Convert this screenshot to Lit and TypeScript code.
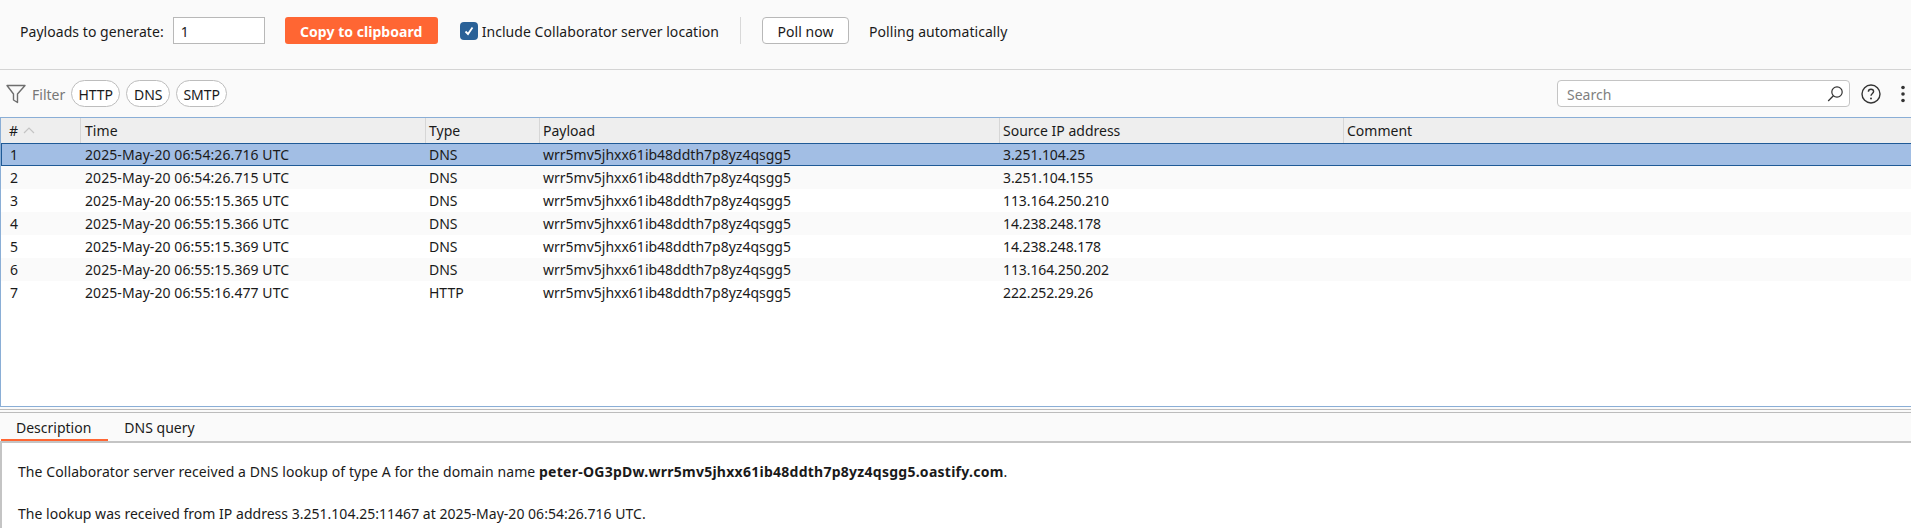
import { LitElement, html, css } from 'lit';
import { customElement } from 'lit/decorators.js';

interface Interaction {
  id: number;
  time: string;
  type: string;
  ip: string;
}

const PAYLOAD = 'wrr5mv5jhxx61ib48ddth7p8yz4qsgg5';

const ROWS: Interaction[] = [
  { id: 1, time: '2025-May-20 06:54:26.716 UTC', type: 'DNS', ip: '3.251.104.25' },
  { id: 2, time: '2025-May-20 06:54:26.715 UTC', type: 'DNS', ip: '3.251.104.155' },
  { id: 3, time: '2025-May-20 06:55:15.365 UTC', type: 'DNS', ip: '113.164.250.210' },
  { id: 4, time: '2025-May-20 06:55:15.366 UTC', type: 'DNS', ip: '14.238.248.178' },
  { id: 5, time: '2025-May-20 06:55:15.369 UTC', type: 'DNS', ip: '14.238.248.178' },
  { id: 6, time: '2025-May-20 06:55:15.369 UTC', type: 'DNS', ip: '113.164.250.202' },
  { id: 7, time: '2025-May-20 06:55:16.477 UTC', type: 'HTTP', ip: '222.252.29.26' },
];

@customElement('app-root')
export class AppRoot extends LitElement {
  static styles = css`
    :host {
      display: block;
      width: 1911px;
      height: 528px;
      overflow: hidden;
      background: #fafafa;
      color: #1a1a1a;
      font-family: 'Noto Sans', sans-serif;
      font-size: 14px;
    }
    .topbar {
      display: flex;
      align-items: center;
      height: 70px;
      box-sizing: border-box;
      padding: 0 0 8px 20px;
      border-bottom: 1px solid #d4d4d4;
      letter-spacing: 0.05px;
    }
    .topbar span {
      padding-top: 2px;
    }
    .qty {
      box-sizing: border-box;
      width: 92px;
      height: 27px;
      margin-left: 9px;
      padding: 2px 0 0 7px;
      display: flex;
      align-items: center;
      background: #fff;
      border: 1px solid #b8b8b8;
    }
    .copy {
      box-sizing: border-box;
      width: 153px;
      height: 27px;
      margin-left: 20px;
      padding-top: 2px;
      display: flex;
      align-items: center;
      justify-content: center;
      background: #ff6633;
      color: #fff;
      font-weight: 700;
      border-radius: 3px;
    }
    .check {
      width: 18px;
      height: 18px;
      margin-left: 22px;
      margin-right: 4px;
      background: #2a6197;
      border-radius: 4px;
      display: flex;
      align-items: center;
      justify-content: center;
    }
    .divider {
      width: 1px;
      height: 27px;
      margin-left: 21px;
      background: #d8d8d8;
    }
    .poll {
      box-sizing: border-box;
      width: 87px;
      height: 27px;
      margin-left: 21px;
      padding-top: 2px;
      display: flex;
      align-items: center;
      justify-content: center;
      background: #fff;
      border: 1px solid #b8b8b8;
      border-radius: 4px;
    }
    .status {
      margin-left: 20px;
    }
    .filterbar {
      display: flex;
      align-items: center;
      height: 47px;
      box-sizing: border-box;
      padding: 0 0 0 6px;
    }
    .filter-label {
      margin-left: 6px;
      margin-right: 6px;
      padding-top: 2px;
      color: #777;
    }
    .pill {
      box-sizing: border-box;
      height: 27px;
      margin-right: 6px;
      padding-top: 2px;
      display: flex;
      align-items: center;
      justify-content: center;
      border: 1px solid #bdbdbd;
      border-radius: 14px;
      background: #fff;
    }
    .pill.http {
      width: 49px;
    }
    .pill.dns {
      width: 44px;
    }
    .pill.smtp {
      width: 51px;
    }
    .search {
      box-sizing: border-box;
      width: 293px;
      height: 27px;
      margin-left: auto;
      padding: 0 6px 0 9px;
      display: flex;
      align-items: center;
      justify-content: space-between;
      background: #fff;
      border: 1px solid #c4c4c4;
      border-radius: 4px;
      color: #808080;
    }
    .search span {
      padding-top: 2px;
    }
    .help {
      margin-left: 11px;
      display: block;
    }
    .dots {
      margin-left: 19px;
      margin-right: 5px;
      display: block;
    }
    .table {
      box-sizing: border-box;
      height: 290px;
      background: #fff;
      border: 1px solid #8aaed6;
      border-right: 0;
    }
    .row {
      display: grid;
      grid-template-columns: 80px 345px 114px 460px 344px 1fr;
      height: 23px;
      line-height: 24px;
    }
    .row > div {
      padding-left: 3px;
      white-space: nowrap;
      overflow: hidden;
    }
    .row > div:nth-child(2) {
      padding-left: 4px;
      letter-spacing: 0.08px;
    }
    .row.body > div:nth-child(5) {
      letter-spacing: -0.1px;
    }
    .head {
      height: 25px;
      line-height: 25px;
      background: #eeeeee;
    }
    .head > div {
      border-right: 1px solid #d6d6d6;
      display: flex;
      align-items: center;
      gap: 5px;
    }
    .head > div:last-child {
      border-right: 0;
    }
    .head > div:first-child {
      padding-left: 8px;
    }
    .row.alt {
      background: #fafafa;
    }
    .row.selected {
      background: #a2bee4;
      box-sizing: border-box;
      line-height: 21px;
      border-top: 1px solid #1f5a96;
      border-bottom: 1px solid #1f5a96;
      box-shadow: inset 1px 0 #1f5a96;
    }
    .row.body > div:first-child {
      padding-left: 9px;
    }
    .split {
      height: 4px;
      margin-top: 2px;
      background: #fafafa;
      border-top: 1px solid #bcbcbc;
      border-bottom: 1px solid #bcbcbc;
      box-sizing: border-box;
    }
    .tabs {
      display: flex;
      height: 30px;
      box-sizing: border-box;
      background: #fafafa;
      border-bottom: 2px solid #c4c4c4;
    }
    .tab {
      box-sizing: border-box;
      height: 28px;
      padding: 0 16px;
      line-height: 29px;
    }
    .tab.active {
      margin-left: 1px;
      padding: 0 17px 0 15px;
      border-bottom: 2px solid #ff6633;
    }
    .details {
      box-sizing: border-box;
      height: 85px;
      padding: 19px 0 0 16px;
      background: #fff;
      border-left: 2px solid #c4c4c4;
    }
    .details p {
      margin: 0 0 22px;
      line-height: 20px;
      letter-spacing: 0.02px;
    }
    .details p.lookup {
      letter-spacing: 0.08px;
    }
    .details b {
      letter-spacing: 0.26px;
    }
  `;

  render() {
    return html`
      <div class="topbar">
        <span>Payloads to generate:</span>
        <div class="qty">1</div>
        <div class="copy">Copy to clipboard</div>
        <div class="check">
          <svg width="12" height="12" viewBox="0 0 12 12">
            <path d="M2.5 6.5 5 9 9.5 2.5" fill="none" stroke="#fff" stroke-width="1.8" />
          </svg>
        </div>
        <span>Include Collaborator server location</span>
        <div class="divider"></div>
        <div class="poll">Poll now</div>
        <span class="status">Polling automatically</span>
      </div>
      <div class="filterbar">
        <svg width="20" height="20" viewBox="0 0 20 20">
          <path d="M1 1.5H19L11.5 10V18.5L7.5 16V10Z" fill="none" stroke="#6e6e6e" stroke-width="1.4" stroke-linejoin="round" />
        </svg>
        <span class="filter-label">Filter</span>
        <div class="pill http">HTTP</div>
        <div class="pill dns">DNS</div>
        <div class="pill smtp">SMTP</div>
        <div class="search">
          <span>Search</span>
          <svg width="16" height="16" viewBox="0 0 16 16">
            <circle cx="10" cy="6" r="5.2" fill="none" stroke="#333" stroke-width="1.2" />
            <path d="M6.4 9.8 1.2 15" stroke="#333" stroke-width="1.3" />
          </svg>
        </div>
        <svg class="help" width="20" height="20" viewBox="0 0 20 20">
          <circle cx="10" cy="10" r="9" fill="none" stroke="#333" stroke-width="1.4" />
          <path d="M7.4 7.8C7.4 6.2 8.6 5.3 10 5.3S12.6 6.2 12.6 7.6C12.6 9.4 10 9.6 10 11.8" fill="none" stroke="#333" stroke-width="1.4" />
          <circle cx="10" cy="14.4" r="1" fill="#333" />
        </svg>
        <svg class="dots" width="6" height="20" viewBox="0 0 6 20">
          <circle cx="3" cy="3.5" r="1.8" fill="#333" />
          <circle cx="3" cy="10" r="1.8" fill="#333" />
          <circle cx="3" cy="16.5" r="1.8" fill="#333" />
        </svg>
      </div>
      <div class="table">
        <div class="row head">
          <div>#
            <svg width="12" height="7" viewBox="0 0 12 7">
              <path d="M1 6 6 1 11 6" fill="none" stroke="#c4c4c4" stroke-width="1.2" />
            </svg>
          </div>
          <div>Time</div>
          <div>Type</div>
          <div>Payload</div>
          <div>Source IP address</div>
          <div>Comment</div>
        </div>
        ${ROWS.map(
          (r, i) => html`
            <div class="row body ${i === 0 ? 'selected' : ''} ${i % 2 === 1 ? 'alt' : ''}">
              <div>${r.id}</div>
              <div>${r.time}</div>
              <div>${r.type}</div>
              <div>${PAYLOAD}</div>
              <div>${r.ip}</div>
              <div></div>
            </div>
          `
        )}
      </div>
      <div class="split"></div>
      <div class="tabs">
        <div class="tab active">Description</div>
        <div class="tab">DNS query</div>
      </div>
      <div class="details">
        <p class="lookup">
          The Collaborator server received a DNS lookup of type A for the domain name
          <b>peter-OG3pDw.${PAYLOAD}.oastify.com</b>.
        </p>
        <p>The lookup was received from IP address 3.251.104.25:11467 at 2025-May-20 06:54:26.716 UTC.</p>
      </div>
    `;
  }
}
